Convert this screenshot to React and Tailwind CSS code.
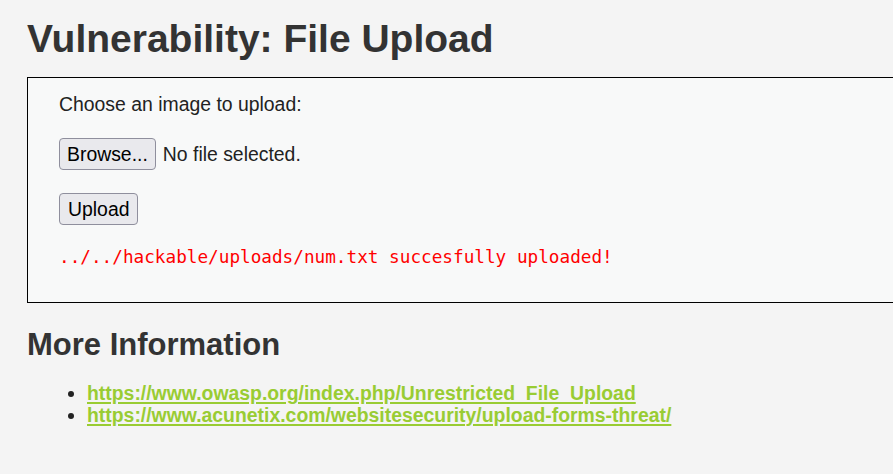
import React from 'react';

const font = { fontFamily: '"Liberation Sans", Arial, sans-serif' };

const links = [
  'https://www.owasp.org/index.php/Unrestricted_File_Upload',
  'https://www.acunetix.com/websitesecurity/upload-forms-threat/',
];

export default function App() {
  return (
    <div className="min-h-screen w-full overflow-hidden bg-[#f4f4f4] text-[#333] font-['Liberation_Sans',Arial,sans-serif]">
      <div className="pl-[27px] pt-[17px]">
        <h1 className="text-[39px] leading-[44px] font-bold text-[#333]">
          Vulnerability: File Upload
        </h1>

        {/* upload form box */}
        <div className="mt-[16px] mr-[-20px] border border-black bg-[#f8f9f9] pl-[31px] pt-[15px] pb-[34px]">
          <p className="text-[19.4px] leading-[22px] text-[#222]">Choose an image to upload:</p>
          <div className="mt-[23px] flex items-center">
            <span className="inline-block rounded-[4px] border border-[#8f8f9d] bg-[#e9e9ed] px-[7px] py-[4px] text-[19.4px] leading-[22px] text-black">
              Browse...
            </span>
            <span className="ml-[7px] text-[19.4px] leading-[22px] text-[#222]">No file selected.</span>
          </div>
          <div className="mt-[23px]">
            <button className="rounded-[4px] border border-[#8f8f9d] bg-[#e9e9ed] px-[8px] py-[4px] text-[19.4px] leading-[22px] text-black" style={font}>
              Upload
            </button>
          </div>
          <pre className="mt-[22px] text-[17.7px] leading-[21px] text-[#ff0000] font-['DejaVu_Sans_Mono',monospace]">
            ../../hackable/uploads/num.txt succesfully uploaded!
          </pre>
        </div>

        <h2 className="mt-[24px] text-[31px] leading-[36px] font-bold text-[#333]">More Information</h2>
        <ul className="mt-[19px] list-disc pl-[60px] text-[19.4px] leading-[22px]">
          {links.map((l) => (
            <li key={l} className="marker:text-[#222]">
              <a href="#" className="font-bold text-[#99cc33] underline decoration-2 underline-offset-2">
                {l}
              </a>
            </li>
          ))}
        </ul>
      </div>
    </div>
  );
}
